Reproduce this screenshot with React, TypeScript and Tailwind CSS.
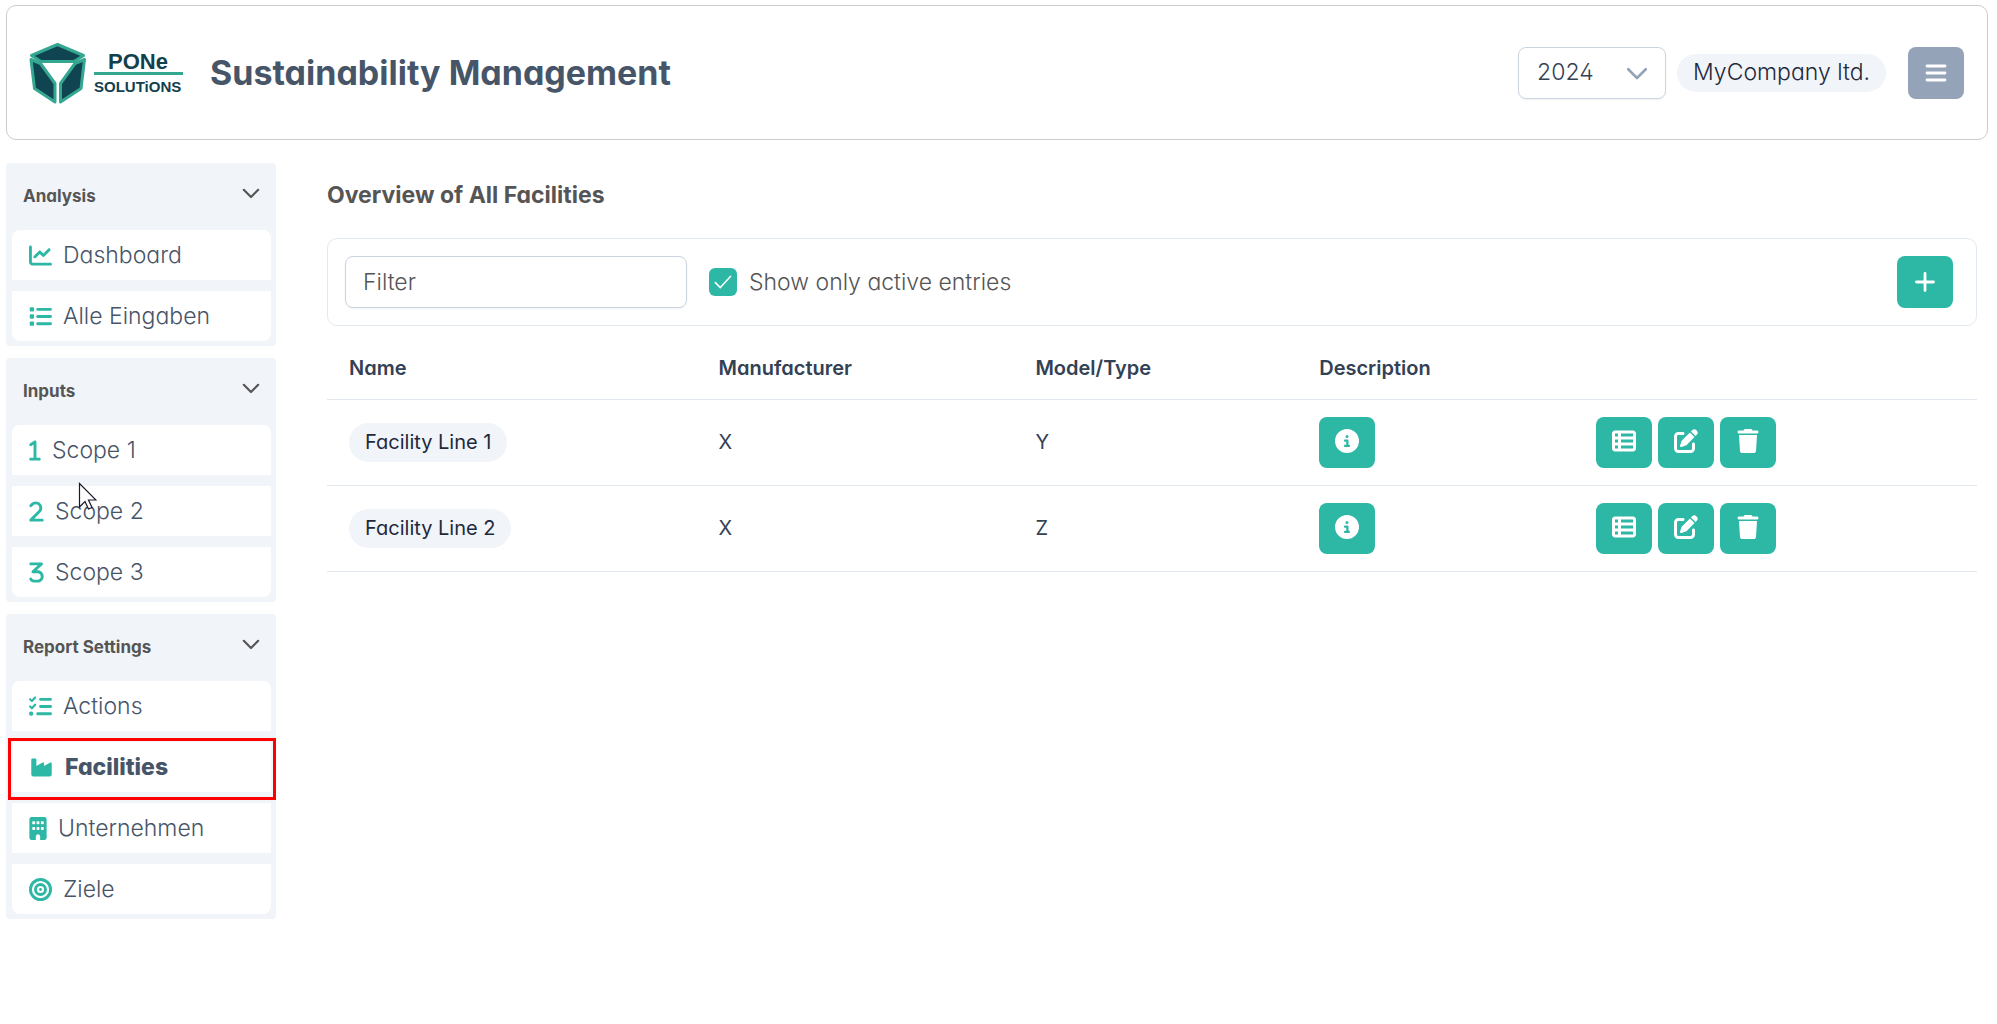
import type { ReactNode } from "react";
import { Fa1, Fa2, Fa3, FaBuilding, FaBullseye, FaChartLine, FaCircleInfo, FaIndustry, FaList, FaListCheck, FaPenToSquare, FaTableList, FaTrash } from "react-icons/fa6";

function Chevron({ className }: { className: string }) {
  return (
    <svg viewBox="0 0 20 12" className={className} fill="none" stroke="currentColor" strokeWidth="2.4" strokeLinecap="round" strokeLinejoin="round" aria-hidden="true">
      <path d="M2 2l8 8 8-8" />
    </svg>
  );
}

function Logo() {
  return (
    <svg viewBox="27 40 160 64" className="h-16 w-40" role="img" aria-label="Pone Solutions">
      <g fill="#0f4450" stroke="#34a791" strokeWidth="3" strokeLinejoin="round">
        <path d="M57.5 43.500L83.500 54.500L74 60.500H41L31.500 54.500Z" />
        <path d="M31 58.500L40.500 62.500L55 82.500V101L34.500 87.500Z" />
        <path d="M84.500 58.500L75 62.500L60.500 82.500V101L81 87.500Z" />
      </g>
      <rect x="94" y="71" width="89" height="3" fill="#34a791" />
      <text x="108" y="68" fontFamily="Liberation Sans" fontWeight="700" fontSize="22" fill="#12404c">PONe</text>
      <text x="94" y="91" fontFamily="Liberation Sans" fontWeight="700" fontSize="15" fill="#12404c">SOLUTiONS</text>
    </svg>
  );
}

type Entry = { label: string; icon: ReactNode; active?: boolean };

const groups: { title: string; entries: Entry[] }[] = [
  { title: "Analysis", entries: [{ label: "Dashboard", icon: <FaChartLine /> }, { label: "Alle Eingaben", icon: <FaList /> }] },
  {
    title: "Inputs",
    entries: [
      { label: "Scope 1", icon: <Fa1 className="w-3" /> },
      { label: "Scope 2", icon: <Fa2 className="w-[15px]" /> },
      { label: "Scope 3", icon: <Fa3 className="w-[15px]" /> },
    ],
  },
  {
    title: "Report Settings",
    entries: [
      { label: "Actions", icon: <FaListCheck /> },
      { label: "Facilities", icon: <FaIndustry />, active: true },
      { label: "Unternehmen", icon: <FaBuilding className="w-[18px]" /> },
      { label: "Ziele", icon: <FaBullseye /> },
    ],
  },
];

const facilities = [
  { name: "Facility Line 1", maker: "X", model: "Y" },
  { name: "Facility Line 2", maker: "X", model: "Z" },
];

function IconButton({ label, children }: { label: string; children: ReactNode }) {
  return (
    <button type="button" aria-label={label} className="flex h-[51px] w-14 items-center justify-center rounded-lg bg-[#2db7a5] pb-0.5 text-2xl text-white">
      {children}
    </button>
  );
}

export default function App() {
  return (
    <div className="min-h-screen bg-white pt-[5px] pr-[9px] pl-1.5 font-['Inter',sans-serif] text-[#334155] [font-feature-settings:'cv02','cv03','cv04','cv11']">
      <header className="flex h-[135px] items-center rounded-[10px] border border-[#cccccc] pr-[23px] pl-5">
        <Logo />
        <h1 className="ml-[23px] text-[34px] font-bold text-[#475569]">Sustainability Management</h1>
        <div className="ml-auto flex items-center">
          <div className="relative">
            <select aria-label="Year" defaultValue="2024" className="h-[52px] w-[148px] appearance-none rounded-lg border border-[#cbd5e1] bg-white pl-[18px] text-[23px] font-light shadow-xs">
              <option>2024</option>
            </select>
            <Chevron className="pointer-events-none absolute top-5 right-[18px] w-[22px] text-[#94a3b8]" />
          </div>
          <span className="ml-[11px] flex h-[38px] items-center rounded-full bg-[#f1f5f9] px-4 text-[23px] font-light text-[#1e293b]">MyCompany ltd.</span>
          <button type="button" aria-label="Menu" className="ml-[22px] flex h-[52px] w-14 items-center justify-center rounded-lg bg-[#94a3b8] text-white">
            <svg viewBox="0 0 22 18" className="w-[22px]" stroke="currentColor" strokeWidth="2.8" strokeLinecap="round" aria-hidden="true">
              <path d="M2 2h18M2 9h18M2 16h18" />
            </svg>
          </button>
        </div>
      </header>

      <div className="mt-[23px] flex items-start">
        <nav className="flex w-[270px] shrink-0 flex-col gap-3">
          {groups.map((group) => (
            <section key={group.title} className="rounded-sm bg-[#f1f5f9] pr-[5px] pb-[5px] pl-1.5">
              <button type="button" className="flex h-[67px] w-full items-center justify-between px-[11px] text-[17px] font-bold text-[#555555]">
                {group.title}
                <Chevron className="mb-1.5 w-[18px]" />
              </button>
              <ul className="flex flex-col gap-[11px]">
                {group.entries.map((entry) => (
                  <li key={entry.label} className="group relative">
                    <a
                      href="#"
                      className={
                        "flex h-[50px] items-center bg-white pr-4 text-[23px] text-[#475569] group-first:rounded-t-lg group-last:rounded-b-lg " +
                        (entry.active ? "gap-3 pl-[18px] font-extrabold" : "gap-[11px] pl-[17px] font-light")
                      }
                    >
                      <span className="text-[#2db7a5]">{entry.icon}</span>
                      {entry.label}
                    </a>
                    {entry.active && <span className="pointer-events-none absolute -top-1 -right-[5px] -bottom-2 -left-1 border-3 border-[#ff0000]" />}
                  </li>
                ))}
              </ul>
            </section>
          ))}
        </nav>

        <main className="ml-[51px] min-w-0 flex-1 pr-[11px]">
          <h2 className="pt-4 text-[23px] leading-8 font-bold text-[#555555]">Overview of All Facilities</h2>
          <div className="mt-[27px] flex h-[88px] items-center rounded-[10px] border border-[#e2e8f0] pr-[23px] pl-[17px]">
            <input aria-label="Filter" placeholder="Filter" className="h-[52px] w-[342px] rounded-lg border border-[#cbd5e1] px-[17px] text-[23px] font-light shadow-xs placeholder:text-[#555555]" />
            <label className="ml-[22px] flex items-center gap-3 text-[23px] font-light text-[#555555]">
              <span className="relative flex">
                <input type="checkbox" defaultChecked className="size-7 appearance-none rounded-md bg-[#2db7a5]" />
                <svg viewBox="0 0 20 16" className="pointer-events-none absolute top-[7px] left-[5px] w-[18px]" fill="none" stroke="white" strokeWidth="1.700" strokeLinecap="round" strokeLinejoin="round" aria-hidden="true">
                  <path d="M1.500 8.500l5.500 5.500L18.500 1.500" />
                </svg>
              </span>
              Show only active entries
            </label>
            <button type="button" aria-label="Add" className="ml-auto flex h-[52px] w-14 items-center justify-center rounded-lg bg-[#2db7a5] text-white">
              <svg viewBox="0 0 20 20" className="w-5" stroke="currentColor" strokeWidth="2.800" strokeLinecap="round" aria-hidden="true">
                <path d="M10 1.500v17M1.500 10h17" />
              </svg>
            </button>
          </div>

          <table className="w-full table-fixed border-collapse text-left text-xl">
            <thead>
              <tr className="h-[73px] border-b border-[#e2e8f0] [&>th]:pt-3 [&>th]:pl-[22px] [&>th]:font-semibold">
                <th className="w-[22.4%]">Name</th>
                <th className="w-[19.2%]">Manufacturer</th>
                <th className="w-[17.2%]">Model/Type</th>
                <th className="w-[16.8%]">Description</th>
                <th aria-label="Actions"></th>
              </tr>
            </thead>
            <tbody>
              {facilities.map((f) => (
                <tr key={f.name} className="h-[86px] border-b border-[#e2e8f0] [&>td]:pl-[22px]">
                  <td>
                    <span className="inline-flex h-[39px] items-center rounded-full bg-[#f1f5f9] px-4 text-[#1e293b]">{f.name}</span>
                  </td>
                  <td>{f.maker}</td>
                  <td>{f.model}</td>
                  <td>
                    <IconButton label="Info"><FaCircleInfo /></IconButton>
                  </td>
                  <td>
                    <div className="flex gap-1.5">
                      <IconButton label="Details"><FaTableList /></IconButton>
                      <IconButton label="Edit"><FaPenToSquare /></IconButton>
                      <IconButton label="Delete"><FaTrash /></IconButton>
                    </div>
                  </td>
                </tr>
              ))}
            </tbody>
          </table>
        </main>
      </div>

      <svg viewBox="0 0 19 28" className="pointer-events-none absolute top-[482px] left-[78px] w-[19px]" fill="white" stroke="#1a1a2a" strokeWidth="1.200" aria-hidden="true">
        <path d="M1.500 1.500V25L7 19.500L10.500 27L14 25.500L10.500 18H18Z" />
      </svg>
    </div>
  );
}
